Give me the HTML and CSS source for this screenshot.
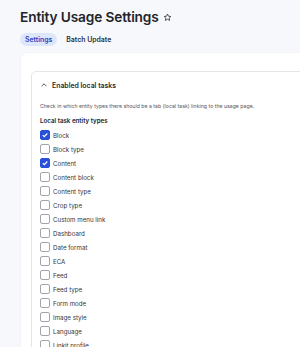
FILE: index.html
```html
<!DOCTYPE html>
<html>
<head>
<meta charset="utf-8">
<link rel="stylesheet" href="styles.css">
</head>
<body>
<div class="page">
  <h1 class="title">Entity Usage Settings
    <svg class="star" viewBox="0 0 24 24" width="9" height="9"><path d="M12 2.8l2.7 5.8 6.3.7-4.7 4.3 1.3 6.2L12 16.6l-5.6 3.2 1.3-6.2L3 9.3l6.3-.7z" fill="none" stroke="#33343a" stroke-width="2.2" stroke-linejoin="round"/></svg>
  </h1>
  <nav class="tabs">
    <a class="tab active">Settings</a>
    <a class="tab">Batch Update</a>
  </nav>
  <main class="card">
    <details class="details" open>
      <summary class="summary">
        <svg class="chev" viewBox="0 0 10 6" width="6" height="4"><path d="M1 5l4-4 4 4" fill="none" stroke="#33343a" stroke-width="1.4"/></svg>
        Enabled local tasks
      </summary>
      <div class="body">
        <p class="desc">Check in which entity types there should be a tab (local task) linking to the usage page.</p>
        <div class="group-label">Local task entity types</div>
        <ul class="checks">
          <li><span class="box checked"><svg viewBox="0 0 10 10" width="8" height="8"><path d="M2.2 5.2l1.9 1.9 3.8-4" fill="none" stroke="#fff" stroke-width="1.5"/></svg></span>Block</li>
          <li><span class="box"></span>Block type</li>
          <li><span class="box checked"><svg viewBox="0 0 10 10" width="8" height="8"><path d="M2.2 5.2l1.9 1.9 3.8-4" fill="none" stroke="#fff" stroke-width="1.5"/></svg></span>Content</li>
          <li><span class="box"></span>Content block</li>
          <li><span class="box"></span>Content type</li>
          <li><span class="box"></span>Crop type</li>
          <li><span class="box"></span>Custom menu link</li>
          <li><span class="box"></span>Dashboard</li>
          <li><span class="box"></span>Date format</li>
          <li><span class="box"></span>ECA</li>
          <li><span class="box"></span>Feed</li>
          <li><span class="box"></span>Feed type</li>
          <li><span class="box"></span>Form mode</li>
          <li><span class="box"></span>Image style</li>
          <li><span class="box"></span>Language</li>
          <li><span class="box"></span>Linkit profile</li>
        </ul>
      </div>
    </details>
  </main>
</div>
</body>
</html>
```
FILE: styles.css
```css
html, body {
  margin: 0;
  padding: 0;
  overflow: hidden;
  height: 100%;
}
body {
  background: #f7f8fc;
  font-family: Inter, "Noto Sans", sans-serif;
  color: #232429;
}
.page {
  padding: 7px 0 0 20px;
}
.title {
  margin: 0;
  font-size: 13.7px;
  line-height: 20px;
  font-weight: 600;
  letter-spacing: -0.01em;
  display: flex;
  align-items: center;
  gap: 4px;
  color: #232429;
}
.star {
  margin-top: 1px;
}
.tabs {
  display: flex;
  gap: 4px;
  margin-top: 6px;
}
.tab {
  font-size: 6.9px;
  font-weight: 600;
  line-height: 13px;
  padding: 0 5px;
  border-radius: 7px;
  color: #2e3038;
}
.tab.active {
  background: #dde6fb;
  color: #2747c3;
}
.card {
  display: block;
  margin: 7px -40px 0 1px;
  background: #fff;
  border-radius: 6px 0 0 0;
  padding: 18px 0 0 10px;
  min-height: 400px;
  box-shadow: 0 0 0 0.5px #eceef3;
}
.details {
  border: 1px solid #e3e5ea;
  border-radius: 5px;
  padding: 0 0 0 8px;
}
.summary {
  list-style: none;
  display: flex;
  align-items: center;
  gap: 5px;
  height: 26px;
  font-size: 6.9px;
  font-weight: 600;
  color: #2a2b31;
  padding-left: 1px;
}
.summary::-webkit-details-marker {
  display: none;
}
.body {
  padding-top: 4px;
}
.desc {
  margin: 0;
  font-size: 5.2px;
  line-height: 8px;
  color: #55575e;
}
.group-label {
  margin-top: 7px;
  font-size: 6.2px;
  font-weight: 600;
  line-height: 8px;
  color: #232429;
}
.checks {
  list-style: none;
  margin: 3px 0 0 0;
  padding: 0;
}
.checks li {
  display: flex;
  align-items: center;
  gap: 3px;
  height: 14px;
  font-size: 6.2px;
  color: #33353b;
}
.box {
  width: 8px;
  height: 8px;
  border: 1px solid #a2a5ad;
  border-radius: 2px;
  background: #fff;
  display: flex;
  align-items: center;
  justify-content: center;
  flex: none;
}
.box.checked {
  background: #2950d9;
  border-color: #2950d9;
}
```
